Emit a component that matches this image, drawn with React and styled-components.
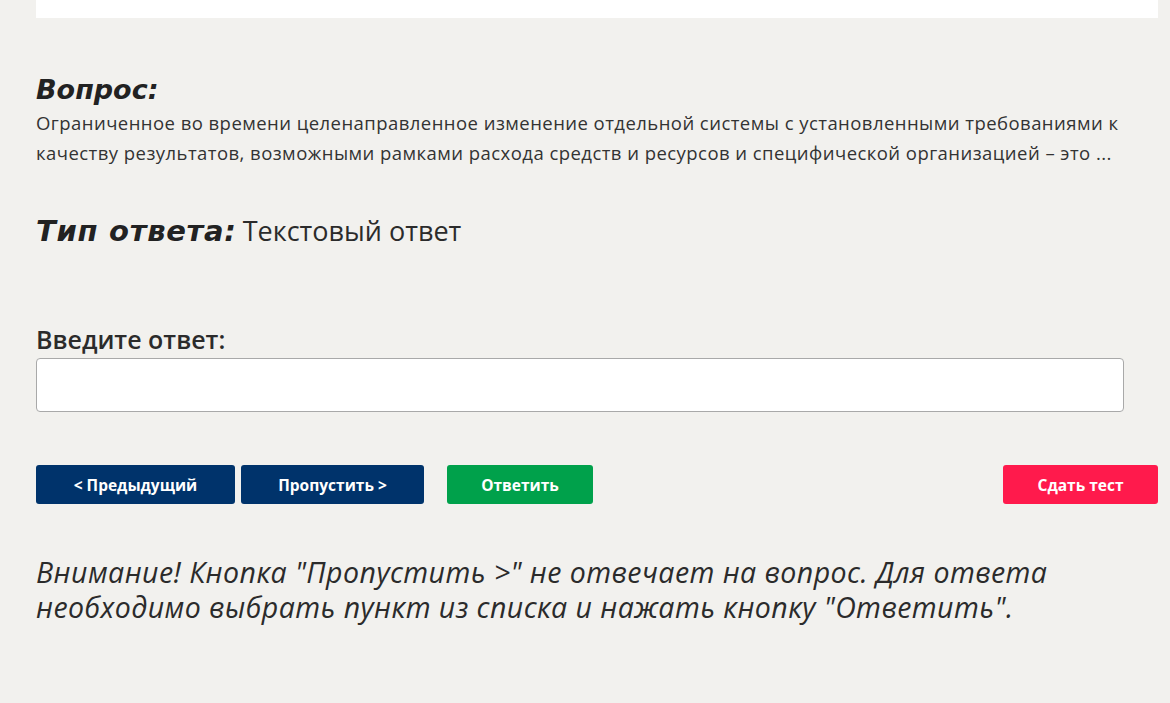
import React from 'react';
import styled, { createGlobalStyle } from 'styled-components';

const GlobalStyle = createGlobalStyle`
  html, body {
    margin: 0;
    padding: 0;
    background: #f2f1ee;
  }
  body {
    font-family: "Open Sans", "Noto Sans", sans-serif;
    color: #2b2b2b;
  }
`;

const Page = styled.div`
  padding: 0 12px 0 36px;
  min-height: 703px;
  box-sizing: border-box;
`;

const TopPanel = styled.div`
  height: 18px;
  background: #ffffff;
`;

const Section = styled.section`
  margin-top: ${(p) => p.$top || 0}px;
`;

const Heading = styled.h2`
  margin: 0;
  font-family: "DejaVu Sans", sans-serif;
  font-size: ${(p) => p.$size || 27}px;
  font-weight: bold;
  font-style: italic;
  letter-spacing: ${(p) => p.$ls || 0}px;
  color: #222;
  line-height: 30px;
`;

const QuestionText = styled.p`
  margin: 3px 0 0;
  font-size: 18.5px;
  letter-spacing: 0.45px;
  line-height: 30px;
  color: #333;
  white-space: nowrap;
`;

const TypeRow = styled.div`
  display: flex;
  align-items: baseline;
  gap: 6px;
  font-size: 27px;
  line-height: 34px;
  color: #2b2b2b;
`;

const Label = styled.label`
  display: block;
  font-size: 25px;
  font-weight: 600;
  line-height: 30px;
  color: #2b2b2b;
  margin-bottom: 4px;
`;

const AnswerInput = styled.input`
  display: block;
  width: 1088px;
  height: 54px;
  box-sizing: border-box;
  border: 1px solid #a9a9a9;
  border-radius: 4px;
  background: #fff;
  padding: 0 12px;
  font-size: 18px;
  font-family: inherit;
`;

const ButtonRow = styled.div`
  display: flex;
  align-items: center;
  width: 1122px;
`;

const Button = styled.button`
  height: 39px;
  width: ${(p) => p.$w}px;
  margin-left: ${(p) => p.$ml || 0}px;
  border: none;
  border-radius: 3px;
  background: ${(p) => p.$bg};
  color: #fff;
  font-family: "Open Sans", sans-serif;
  font-size: 15.5px;
  font-weight: 700;
  cursor: pointer;
`;

const Spacer = styled.div`
  flex: 1;
`;

const Notice = styled.p`
  margin: 0;
  font-size: 28.5px;
  font-style: italic;
  line-height: 35px;
  color: #2b2b2b;
  letter-spacing: 0.45px;
`;

const App = () => (
  <>
    <GlobalStyle />
    <Page>
      <TopPanel />
      <Section $top={57}>
        <Heading $size={27}>Вопрос:</Heading>
        <QuestionText>
          Ограниченное во времени целенаправленное изменение отдельной системы с установленными требованиями к
          <br />
          качеству результатов, возможными рамками расхода средств и ресурсов и специфической организацией – это ...
        </QuestionText>
      </Section>
      <Section $top={46}>
        <TypeRow>
          <Heading as="span" $size={29} $ls={0.7}>Тип ответа:</Heading>
          <span>Текстовый ответ</span>
        </TypeRow>
      </Section>
      <Section $top={76}>
        <Label htmlFor="answer">Введите ответ:</Label>
        <AnswerInput id="answer" type="text" />
      </Section>
      <Section $top={53}>
        <ButtonRow>
          <Button $w={199} $bg="#00336b">&lt; Предыдущий</Button>
          <Button $w={183} $ml={6} $bg="#00336b">Пропустить &gt;</Button>
          <Button $w={146} $ml={23} $bg="#00a14b">Ответить</Button>
          <Spacer />
          <Button $w={155} $bg="#ff1a4c">Сдать тест</Button>
        </ButtonRow>
      </Section>
      <Section $top={51}>
        <Notice>
          Внимание! Кнопка "Пропустить &gt;" не отвечает на вопрос. Для ответа
          <br />
          необходимо выбрать пункт из списка и нажать кнопку "Ответить".
        </Notice>
      </Section>
    </Page>
  </>
);

export default App;
